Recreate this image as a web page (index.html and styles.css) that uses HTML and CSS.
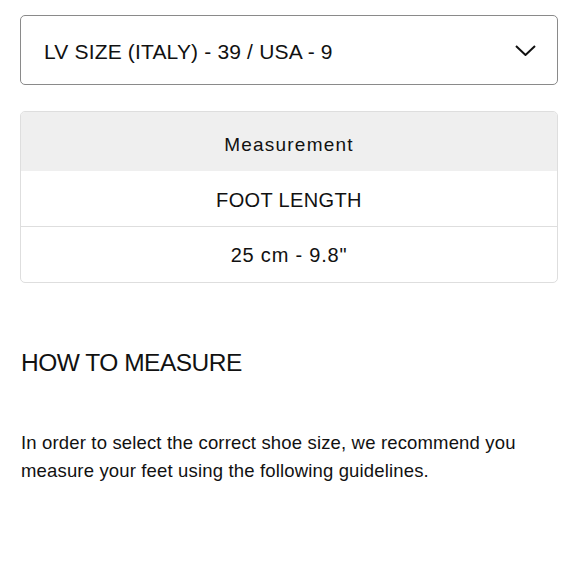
FILE: index.html
```html
<!DOCTYPE html>
<html>
<head>
<meta charset="utf-8">
<link rel="stylesheet" href="styles.css">
</head>
<body>
<div class="page">
  <div class="select">
    <span class="select-text">LV SIZE (ITALY) - 39 / USA - 9</span>
    <svg class="chevron" width="21" height="11" viewBox="0 0 21 11"><path d="M1 1 L10.5 10 L20 1" fill="none" stroke="#111" stroke-width="2"/></svg>
  </div>
  <div class="table">
    <div class="row head">Measurement</div>
    <div class="row foot">FOOT LENGTH</div>
    <div class="row last">25 cm - 9.8"</div>
  </div>
  <h2 class="title">HOW TO MEASURE</h2>
  <p class="text">In order to select the correct shoe size, we recommend you measure your feet using the following guidelines.</p>
</div>
</body>
</html>
```
FILE: styles.css
```css
html, body { margin: 0; padding: 0; background: #fff; }
body { font-family: "Liberation Sans", Arial, sans-serif; color: #111; }
.page { padding: 15px 22px 0 20px; }
.select {
  height: 68px;
  border: 1px solid #8a8a8a;
  border-radius: 5px;
  display: flex;
  align-items: center;
  justify-content: space-between;
  padding: 0 21px 0 23px;
}
.select-text { font-size: 21px; letter-spacing: 0.17px; padding-top: 3px; }
.chevron { display: block; margin-top: 1px; }
.table {
  margin-top: 26px;
  border: 1px solid #dedede;
  border-radius: 5px;
  overflow: hidden;
}
.row {
  display: flex;
  align-items: center;
  justify-content: center;
  font-size: 20px;
  border-bottom: 1px solid #dedede;
  padding-top: 2px;
  box-sizing: border-box;
  height: 56px;
}
.row.head {
  background: #efefef;
  height: 59px;
  border-bottom: none;
  font-size: 19px;
  letter-spacing: 1.2px;
  padding-top: 6px;
}
.row.foot { letter-spacing: 0.36px; padding-top: 3px; }
.row.last { border-bottom: none; height: 55px; letter-spacing: 0.8px; }
.title {
  margin: 65px 0 0 0;
  font-weight: normal;
  font-size: 24.5px;
  letter-spacing: -0.5px;
  line-height: 30px;
  padding-left: 1px;
}
.text {
  margin: 51px 0 0 0;
  font-size: 18.5px;
  letter-spacing: 0.16px;
  line-height: 28px;
  padding-left: 1px;
}
```
